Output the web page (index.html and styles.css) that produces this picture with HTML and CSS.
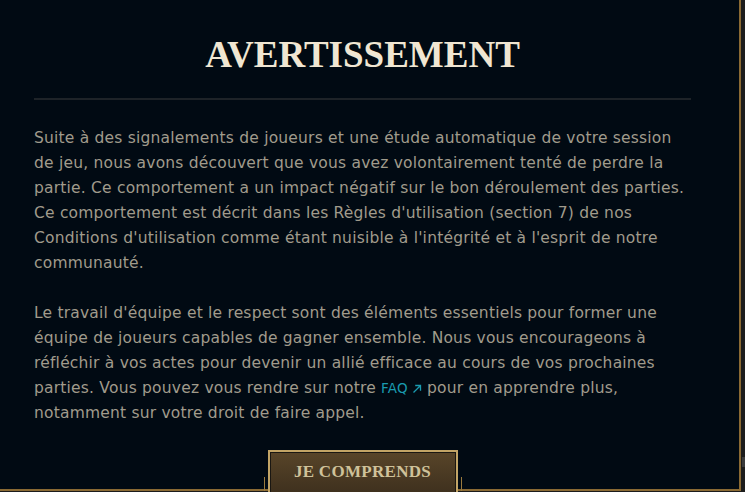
FILE: index.html
```html
<!DOCTYPE html>
<html lang="fr">
<head>
<meta charset="utf-8">
<title>Avertissement</title>
<link rel="stylesheet" href="styles.css">
</head>
<body>
<div class="page">
  <div class="frame">
    <div class="content">
      <h1 class="title">AVERTISSEMENT</h1>
      <div class="divider"></div>
      <div class="body">
        <p>Suite à des signalements de joueurs et une étude automatique de votre session<br>de jeu, nous avons découvert que vous avez volontairement tenté de perdre la<br>partie. Ce comportement a un impact négatif sur le bon déroulement des parties.<br>Ce comportement est décrit dans les Règles d'utilisation (section 7) de nos<br>Conditions d'utilisation comme étant nuisible à l'intégrité et à l'esprit de notre<br>communauté.</p>
        <p>Le travail d'équipe et le respect sont des éléments essentiels pour former une<br>équipe de joueurs capables de gagner ensemble. Nous vous encourageons à<br>réfléchir à vos actes pour devenir un allié efficace au cours de vos prochaines<br>parties. Vous pouvez vous rendre sur notre <a class="link" href="#">FAQ<svg class="ext" viewBox="0 0 10 10" width="10" height="10" aria-hidden="true"><path d="M1.5 8.5 L8.3 1.7 M3.2 1.5 H8.5 V6.8" fill="none" stroke="currentColor" stroke-width="1.3"/></svg></a> pour en apprendre plus,<br>notamment sur votre droit de faire appel.</p>
      </div>
      <div class="actions">
        <button class="btn" type="button">JE COMPRENDS</button>
      </div>
    </div>
  </div>
  <div class="gutter"><div class="thumb"></div></div>
</div>
</body>
</html>
```

FILE: styles.css
```css
html, body {
  margin: 0;
  padding: 0;
  height: 100%;
  overflow: hidden;
  background: #1c1c1c;
}

.page {
  display: flex;
  align-items: flex-start;
  height: 492px;
}

.frame {
  position: relative;
  width: 739px;
  height: 489px;
  flex: 0 0 auto;
  background: #010a13;
  border-right: 2px solid #8a6a34;
  border-bottom: 2px solid #8a6a34;
}

.content {
  width: 657px;
  padding: 36px 0 0 34px;
}

.title {
  margin: 0;
  text-align: center;
  font-family: "Liberation Serif", "Times New Roman", serif;
  font-weight: 700;
  font-size: 37px;
  line-height: 37px;
  letter-spacing: 0;
  color: #f0e6d2;
}

.divider {
  height: 2px;
  margin-top: 25px;
  background: #1e2328;
}

.body {
  margin-top: 26px;
  font-family: "DejaVu Sans", "Noto Sans", sans-serif;
  font-size: 15.5px;
  line-height: 25px;
  letter-spacing: 0.2px;
  color: #a09b8c;
  white-space: nowrap;
}

.body p {
  margin: 0 0 25px 0;
}

.link {
  color: #1a9bb0;
  text-decoration: none;
  font-size: 13.5px;
}

.ext {
  margin-left: 4px;
  vertical-align: -1px;
}

.actions {
  display: flex;
  justify-content: center;
  margin-top: -1px;
}

.btn {
  position: relative;
  z-index: 1;
  width: 190px;
  height: 52px;
  margin: 0;
  padding: 0 0 9px 0;
  box-sizing: border-box;
  display: block;
  border: 2px solid #c2a466;
  box-shadow: inset 0 0 0 1px #1a1712;
  background: linear-gradient(to bottom, #584529 0%, #463621 60%, #3a2d1c 100%);
  font-family: "Liberation Serif", "Times New Roman", serif;
  font-weight: 700;
  font-size: 17px;
  line-height: 20px;
  letter-spacing: 0.3px;
  color: #cfc29a;
  text-align: center;
}

.btn::before,
.btn::after {
  content: "";
  position: absolute;
  top: 25px;
  width: 1px;
  height: 14px;
  background: #9a7a3e;
}

.btn::before { left: -6px; }
.btn::after { right: -6px; }

.gutter {
  flex: 0 0 4px;
  height: 492px;
  display: flex;
  flex-direction: column;
  padding-top: 457px;
  box-sizing: border-box;
}

.thumb {
  margin-left: 1px;
  width: 3px;
  height: 10px;
  background: #3a3a3a;
}
```
